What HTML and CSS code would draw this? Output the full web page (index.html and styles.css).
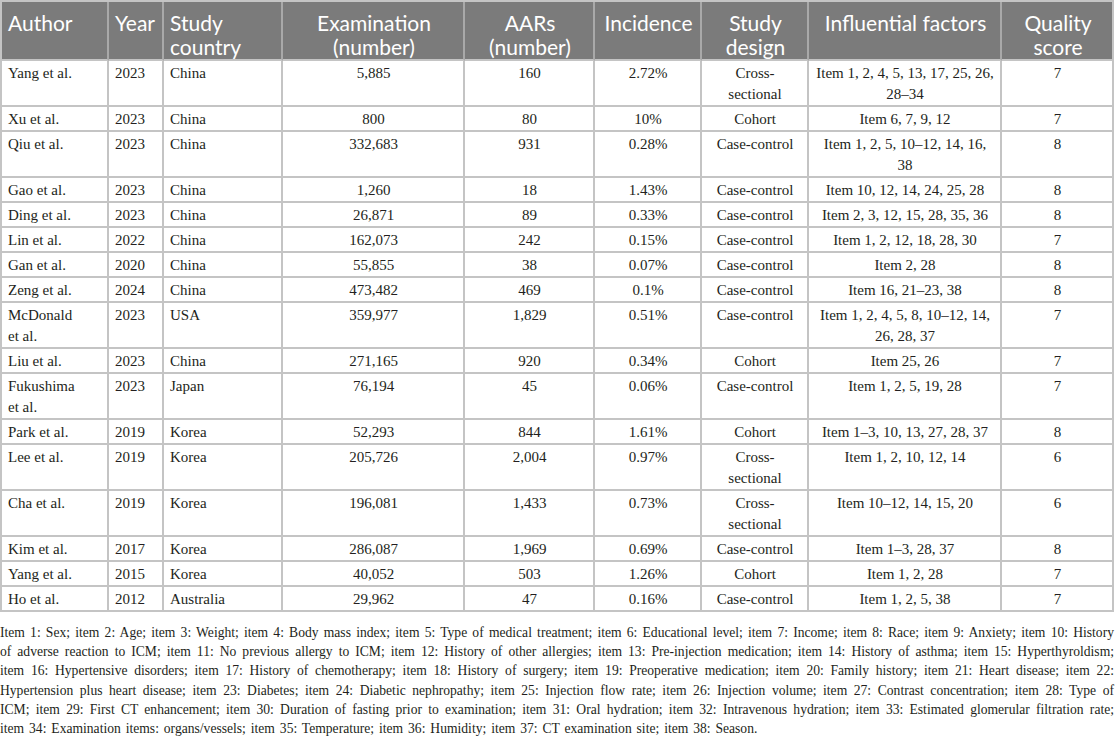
FILE: index.html
```html
<!DOCTYPE html>
<html lang="en">
<head>
<meta charset="utf-8">
<title>Studies table</title>
<link rel="stylesheet" href="styles.css">
</head>
<body>
<table class="data">
  <colgroup>
    <col class="c-author"><col class="c-year"><col class="c-country"><col class="c-exam"><col class="c-aar"><col class="c-inc"><col class="c-design"><col class="c-factors"><col class="c-score">
  </colgroup>
  <thead>
    <tr>
      <th class="l">Author</th>
      <th class="l">Year</th>
      <th class="l">Study<br>country</th>
      <th>Examination<br>(number)</th>
      <th>AARs<br>(number)</th>
      <th>Incidence</th>
      <th>Study<br>design</th>
      <th>Influential factors</th>
      <th>Quality<br>score</th>
    </tr>
  </thead>
  <tbody>
    <tr><td class="l">Yang et al.</td><td class="l">2023</td><td class="l">China</td><td>5,885</td><td>160</td><td>2.72%</td><td>Cross-<br>sectional</td><td>Item 1, 2, 4, 5, 13, 17, 25, 26,<br>28–34</td><td>7</td></tr>
    <tr><td class="l">Xu et al.</td><td class="l">2023</td><td class="l">China</td><td>800</td><td>80</td><td>10%</td><td>Cohort</td><td>Item 6, 7, 9, 12</td><td>7</td></tr>
    <tr><td class="l">Qiu et al.</td><td class="l">2023</td><td class="l">China</td><td>332,683</td><td>931</td><td>0.28%</td><td>Case-control</td><td>Item 1, 2, 5, 10–12, 14, 16,<br>38</td><td>8</td></tr>
    <tr><td class="l">Gao et al.</td><td class="l">2023</td><td class="l">China</td><td>1,260</td><td>18</td><td>1.43%</td><td>Case-control</td><td>Item 10, 12, 14, 24, 25, 28</td><td>8</td></tr>
    <tr><td class="l">Ding et al.</td><td class="l">2023</td><td class="l">China</td><td>26,871</td><td>89</td><td>0.33%</td><td>Case-control</td><td>Item 2, 3, 12, 15, 28, 35, 36</td><td>8</td></tr>
    <tr><td class="l">Lin et al.</td><td class="l">2022</td><td class="l">China</td><td>162,073</td><td>242</td><td>0.15%</td><td>Case-control</td><td>Item 1, 2, 12, 18, 28, 30</td><td>7</td></tr>
    <tr><td class="l">Gan et al.</td><td class="l">2020</td><td class="l">China</td><td>55,855</td><td>38</td><td>0.07%</td><td>Case-control</td><td>Item 2, 28</td><td>8</td></tr>
    <tr><td class="l">Zeng et al.</td><td class="l">2024</td><td class="l">China</td><td>473,482</td><td>469</td><td>0.1%</td><td>Case-control</td><td>Item 16, 21–23, 38</td><td>8</td></tr>
    <tr><td class="l">McDonald<br>et al.</td><td class="l">2023</td><td class="l">USA</td><td>359,977</td><td>1,829</td><td>0.51%</td><td>Case-control</td><td>Item 1, 2, 4, 5, 8, 10–12, 14,<br>26, 28, 37</td><td>7</td></tr>
    <tr><td class="l">Liu et al.</td><td class="l">2023</td><td class="l">China</td><td>271,165</td><td>920</td><td>0.34%</td><td>Cohort</td><td>Item 25, 26</td><td>7</td></tr>
    <tr><td class="l">Fukushima<br>et al.</td><td class="l">2023</td><td class="l">Japan</td><td>76,194</td><td>45</td><td>0.06%</td><td>Case-control</td><td>Item 1, 2, 5, 19, 28</td><td>7</td></tr>
    <tr><td class="l">Park et al.</td><td class="l">2019</td><td class="l">Korea</td><td>52,293</td><td>844</td><td>1.61%</td><td>Cohort</td><td>Item 1–3, 10, 13, 27, 28, 37</td><td>8</td></tr>
    <tr><td class="l">Lee et al.</td><td class="l">2019</td><td class="l">Korea</td><td>205,726</td><td>2,004</td><td>0.97%</td><td>Cross-<br>sectional</td><td>Item 1, 2, 10, 12, 14</td><td>6</td></tr>
    <tr><td class="l">Cha et al.</td><td class="l">2019</td><td class="l">Korea</td><td>196,081</td><td>1,433</td><td>0.73%</td><td>Cross-<br>sectional</td><td>Item 10–12, 14, 15, 20</td><td>6</td></tr>
    <tr><td class="l">Kim et al.</td><td class="l">2017</td><td class="l">Korea</td><td>286,087</td><td>1,969</td><td>0.69%</td><td>Case-control</td><td>Item 1–3, 28, 37</td><td>8</td></tr>
    <tr><td class="l">Yang et al.</td><td class="l">2015</td><td class="l">Korea</td><td>40,052</td><td>503</td><td>1.26%</td><td>Cohort</td><td>Item 1, 2, 28</td><td>7</td></tr>
    <tr><td class="l">Ho et al.</td><td class="l">2012</td><td class="l">Australia</td><td>29,962</td><td>47</td><td>0.16%</td><td>Case-control</td><td>Item 1, 2, 5, 38</td><td>7</td></tr>
  </tbody>
</table>
<p class="notes">
  <span class="ln">Item 1: Sex; item 2: Age; item 3: Weight; item 4: Body mass index; item 5: Type of medical treatment; item 6: Educational level; item 7: Income; item 8: Race; item 9: Anxiety; item 10: History</span>
  <span class="ln">of adverse reaction to ICM; item 11: No previous allergy to ICM; item 12: History of other allergies; item 13: Pre-injection medication; item 14: History of asthma; item 15: Hyperthyroldism;</span>
  <span class="ln">item 16: Hypertensive disorders; item 17: History of chemotherapy; item 18: History of surgery; item 19: Preoperative medication; item 20: Family history; item 21: Heart disease; item 22:</span>
  <span class="ln">Hypertension plus heart disease; item 23: Diabetes; item 24: Diabetic nephropathy; item 25: Injection flow rate; item 26: Injection volume; item 27: Contrast concentration; item 28: Type of</span>
  <span class="ln">ICM; item 29: First CT enhancement; item 30: Duration of fasting prior to examination; item 31: Oral hydration; item 32: Intravenous hydration; item 33: Estimated glomerular filtration rate;</span>
  <span class="ln last">item 34: Examination items: organs/vessels; item 35: Temperature; item 36: Humidity; item 37: CT examination site; item 38: Season.</span>
</p>
</body>
</html>
```
FILE: styles.css
```css
html, body {
  margin: 0;
  padding: 0;
  background: #ffffff;
}

body {
  width: 1116px;
  color: #231f20;
  font-family: "Liberation Serif", "Times New Roman", serif;
}

.data {
  border-collapse: separate;
  border-spacing: 0;
  table-layout: fixed;
  width: 1114px;
  border-top: 2px solid #c4c4c4;
  border-left: 2px solid #c4c4c4;
}

.c-author { width: 107px; }
.c-year { width: 55px; }
.c-country { width: 119px; }
.c-exam { width: 182px; }
.c-aar { width: 130px; }
.c-inc { width: 107px; }
.c-design { width: 107px; }
.c-factors { width: 193px; }
.c-score { width: 112px; }

.data th,
.data td {
  border-right: 2px solid #c4c4c4;
  border-bottom: 2px solid #c4c4c4;
  text-align: center;
  vertical-align: top;
  white-space: nowrap;
  box-sizing: border-box;
}

.data th {
  background: #7b7b7b;
  color: #ffffff;
  font-family: Lato, "Open Sans", sans-serif;
  font-weight: 400;
  font-size: 21px;
  line-height: 24px;
  padding: 9px 4px 0 6px;
  border-right-color: #a9a9a9;
}

.data thead th:last-child {
  border-right-color: #c4c4c4;
}

.data td {
  font-size: 15px;
  line-height: 21px;
  padding: 2px 5px 0 6px;
}

.data .l {
  text-align: left;
}

.notes {
  margin: 11px 0 0;
  padding: 0 2px 0 0;
  font-size: 13.6px;
  line-height: 19.2px;
  color: #231f20;
}

.notes .ln {
  display: block;
  text-align: justify;
  text-align-last: justify;
  white-space: nowrap;
}

.notes .ln.last {
  text-align-last: left;
  word-spacing: 1.5px;
}
```
